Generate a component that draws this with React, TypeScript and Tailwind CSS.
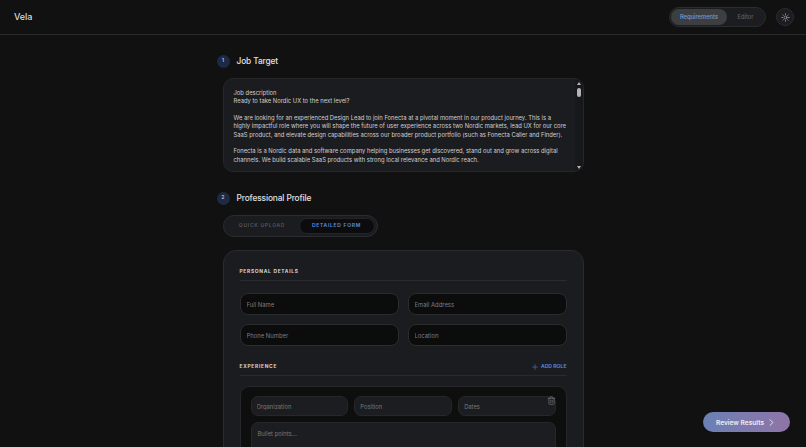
import { ChevronRight, Plus, Sun, Trash2 } from "lucide-react";

const font = { fontFamily: "Inter, 'Liberation Sans', sans-serif" };

function StepTitle({ n, title }: { n: number; title: string }) {
  return (
    <div className="flex items-center gap-[7px] -ml-[6px] h-[15px]">
      <div className="w-[13px] h-[13px] rounded-full bg-[#1d2a44] flex items-center justify-center text-[4.6px] font-semibold text-[#c5d2ec]">
        {n}
      </div>
      <h2 className="text-[8.3px] leading-[15px] font-medium text-[#e2e2e4] tracking-[-0.1px]">{title}</h2>
    </div>
  );
}

function Field({ label }: { label: string }) {
  return (
    <input
      placeholder={label}
      className="w-full h-[22px] rounded-[8px] bg-[#0c0c0d] border border-[#2b2c2f] px-[6px] text-[5.9px] placeholder:text-[#7c7d81] outline-none"
    />
  );
}

function SmallField({ label }: { label: string }) {
  return (
    <input
      placeholder={label}
      className="w-full h-[20px] rounded-[7px] bg-[#1c1d20] border border-[#26272a] px-[5px] text-[5.8px] placeholder:text-[#77787c] outline-none"
    />
  );
}

function SectionLabel({ text }: { text: string }) {
  return <h3 className="text-[4.9px] leading-[7px] font-bold tracking-[0.7px] text-[#d6d6d8] uppercase">{text}</h3>;
}

export default function App() {
  return (
    <div style={font} className="h-screen overflow-hidden bg-[#111112] text-[#d0d0d2] relative antialiased">
      {/* Header */}
      <header className="h-[35px] border-b border-[#2a2a2c] flex items-center justify-between pl-[14px] pr-[12px]">
        <span className="text-[9px] font-medium text-[#dcdcde] tracking-[-0.1px]">Vela</span>
        <div className="flex items-center gap-[10px]">
          <div className="w-[97px] h-[20px] rounded-full bg-[#1c1d20] border border-[#2b2c2f] flex items-center p-[1px]">
            <div className="w-[56px] h-[16px] rounded-full bg-[#3d3e40] flex items-center justify-center text-[5.8px] font-medium text-[#6f9ae0]">
              Requirements
            </div>
            <div className="flex-1 text-center text-[5.7px] font-medium text-[#5f6064]">Editor</div>
          </div>
          <div className="w-[18px] h-[18px] rounded-full bg-[#1c1d20] border border-[#2b2c2f] flex items-center justify-center">
            <Sun className="w-[9px] h-[9px] text-[#a9a9ab]" />
          </div>
        </div>
      </header>

      <main className="w-[361px] mx-auto pt-[19px]">
        <StepTitle n={1} title="Job Target" />

        {/* Job description */}
        <div className="mt-[9px] h-[94px] rounded-[10px] bg-[#1b1c1f] border border-[#26272a] flex overflow-hidden">
          <div className="flex-1 pl-[10px] pt-[9.5px] pr-[7px] text-[5.85px] leading-[8.4px] text-[#cfcfd1]">
            <p>Job description</p>
            <p>Ready to take Nordic UX to the next level?</p>
            <p className="mt-[8.4px]">
              We are looking for an experienced Design Lead to join Fonecta at a pivotal moment in our product journey. This is a highly impactful role where you will shape the future of user experience across two Nordic markets, lead UX for our core SaaS product, and elevate design capabilities across our broader product portfolio (such as Fonecta Caller and Finder).
            </p>
            <p className="mt-[8.4px]">
              Fonecta is a Nordic data and software company helping businesses get discovered, stand out and grow across digital channels. We build scalable SaaS products with strong local relevance and Nordic reach.
            </p>
          </div>
          <div className="w-[8px] shrink-0 bg-[#17181a] flex flex-col items-center justify-between pt-[3px] pb-[2px]">
            <div className="flex flex-col items-center gap-[3px]">
              <div className="w-0 h-0 border-x-[2.5px] border-x-transparent border-b-[3px] border-b-[#b4b4b6]" />
              <div className="w-[4px] h-[8.5px] rounded-full bg-[#b4b4b6]" />
            </div>
            <div className="w-0 h-0 border-x-[2.5px] border-x-transparent border-t-[3px] border-t-[#b4b4b6]" />
          </div>
        </div>

        <div className="mt-[19px]">
          <StepTitle n={2} title="Professional Profile" />
        </div>

        {/* Tabs */}
        <div className="mt-[9px] w-[155px] h-[22px] rounded-full bg-[#1b1c1f] border border-[#2b2c2f] flex items-center p-[2px] text-[5px] font-semibold tracking-[0.7px]">
          <div className="w-[74px] text-center text-[#55565c]">QUICK UPLOAD</div>
          <div className="w-[77px] h-[16px] rounded-full bg-[#0c0c0e] border border-[#232427] flex items-center justify-center text-[#5b8fe0]">
            DETAILED FORM
          </div>
        </div>

        {/* Form card */}
        <div className="mt-[13px] rounded-[13px] bg-[#1b1c1f] border border-[#2a2b2e] px-[16px] pt-[17px] pb-[20px]">
          <div className="pb-[5px] border-b border-[#2a2b2e]">
            <SectionLabel text="Personal Details" />
          </div>
          <div className="mt-[12px] grid grid-cols-2 gap-x-[9px] gap-y-[9px]">
            <Field label="Full Name" />
            <Field label="Email Address" />
            <Field label="Phone Number" />
            <Field label="Location" />
          </div>

          <div className="mt-[17px] pb-[5px] border-b border-[#2a2b2e] flex items-center justify-between">
            <SectionLabel text="Experience" />
            <div className="flex items-center h-[7px] gap-[1.5px] text-[5.1px] leading-[7px] font-semibold text-[#5b8fe0]">
              <Plus className="w-[8px] h-[8px]" strokeWidth={1.5} />
              ADD ROLE
            </div>
          </div>

          <div className="mt-[10px] rounded-[9px] bg-[#0e0e0f] border border-[#26272a] px-[10px] pt-[9px] pb-[10px] relative">
            <Trash2 className="absolute right-[10px] top-[9px] w-[9px] h-[9px] text-[#8a8b8e]" strokeWidth={1.5} />
            <div className="grid grid-cols-3 gap-[6.5px]">
              <SmallField label="Organization" />
              <SmallField label="Position" />
              <SmallField label="Dates" />
            </div>
            <textarea
              placeholder="Bullet points..."
              className="mt-[6px] block w-full h-[60px] rounded-[7px] bg-[#1c1d20] border border-[#26272a] px-[6px] py-[6.5px] text-[5.9px] leading-[8.4px] placeholder:text-[#77787c] outline-none resize-none"
            />
          </div>
        </div>
      </main>

      <button className="fixed right-[16px] bottom-[15px] w-[87px] h-[20px] rounded-full bg-gradient-to-r from-[#6a80b4] to-[#8f74a8] flex items-center justify-center gap-[2px] text-[6.6px] leading-[20px] font-semibold text-[#eeeef2]">
        <span className="pt-[1px]">Review Results</span>
        <ChevronRight className="w-[11px] h-[11px]" />
      </button>
    </div>
  );
}
